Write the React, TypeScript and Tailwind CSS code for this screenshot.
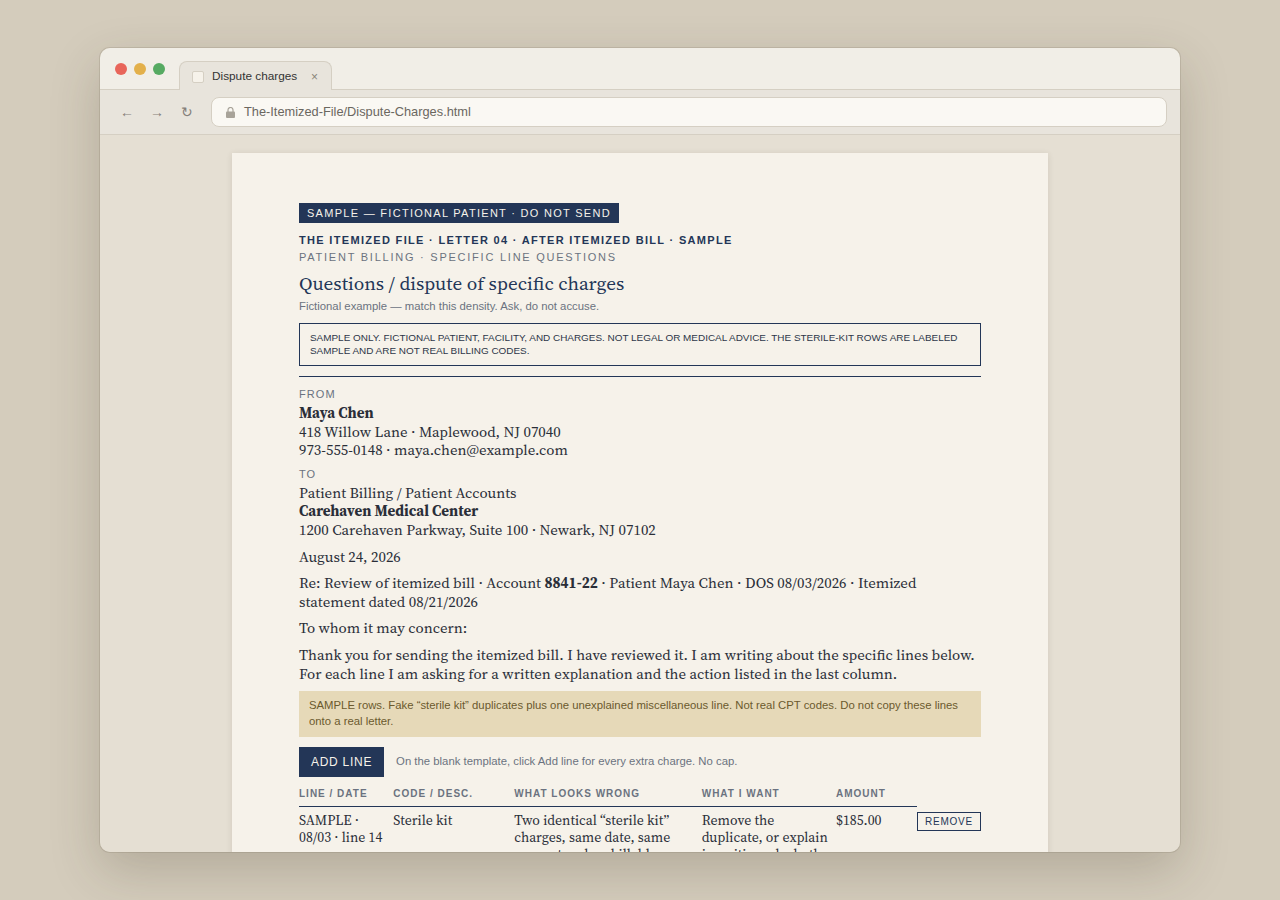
const serif = "font-['Source_Serif_4','Noto_Serif',serif]"
const sans = "font-['Liberation_Sans',sans-serif]"

const cols = [
  { label: 'LINE / DATE', width: 'w-[94.3px]' },
  { label: 'CODE / DESC.', width: 'w-[121px]' },
  { label: 'WHAT LOOKS WRONG', width: 'w-[187.4px]' },
  { label: 'WHAT I WANT', width: 'w-[134.3px]' },
  { label: 'AMOUNT', width: 'w-[81px]' },
]

function BrowserChrome() {
  return (
    <>
      <div className="flex h-[42px] items-end bg-[#f1eee7] pl-[15px] border-b border-[#d5cfc3]">
        <div className="flex gap-[7px] self-start pt-[15px]">
          <span className="w-3 h-3 rounded-full bg-[#e8655a]" />
          <span className="w-3 h-3 rounded-full bg-[#e3b04b]" />
          <span className="w-3 h-3 rounded-full bg-[#56aa62]" />
        </div>
        <div className="flex items-center h-[29px] w-[153px] ml-[14px] -mb-px px-3 pt-[2px] bg-[#e8e4dc] border border-b-0 border-[#d5cfc3] rounded-t-lg">
          <span className="w-3 h-3 rounded-[2px] bg-[#f6f2ea] border border-[#d5cfc3]" />
          <span className="ml-2 text-[11.8px] text-[#333]">Dispute charges</span>
          <span className="ml-auto mr-px text-xs text-[#8a857a]">×</span>
        </div>
      </div>
      <div className="flex items-center h-[45px] bg-[#e8e4dc] border-b border-[#d5cfc3] pl-[18px] pr-[13px]">
        <div className="flex w-[93px] gap-3 text-sm text-[#85807a]">
          <span className="w-[18px] text-center">←</span>
          <span className="w-[18px] text-center">→</span>
          <span className="w-[18px] text-center">↻</span>
        </div>
        <div className="flex flex-1 items-center h-[30px] pl-[14px] pr-3 bg-[#faf8f3] border border-[#d5cfc3] rounded-lg">
          <svg width="9" height="11" viewBox="0 0 9 11" className="text-[#a8a399]">
            <rect x="0" y="4.5" width="9" height="6.5" rx="1" fill="currentColor" />
            <path d="M2 5V3a2.5 2.5 0 0 1 5 0v2" fill="none" stroke="currentColor" strokeWidth="1.2" />
          </svg>
          <span className="ml-[9px] text-[12.8px] text-[#6b675f]">The-Itemized-File/Dispute-Charges.html</span>
        </div>
      </div>
    </>
  )
}

export default function App() {
  return (
    <div className={`flex h-[900px] items-center justify-center bg-[#d4ccbc] ${sans}`}>
      <div className="flex flex-col w-[1080px] h-[804px] overflow-hidden rounded-[10px] shadow-[0_0_0_1px_rgba(120,110,90,0.2),0_18px_50px_rgba(60,50,30,0.22)]">
        <BrowserChrome />
        <div className="flex-1 overflow-hidden bg-[#e5dfd3] pt-[18px]">
          <div className={`mx-auto w-[816px] bg-[#f6f2ea] pt-[50px] px-[67px] pb-16 shadow-[0_1px_6px_rgba(60,50,30,0.12)] text-[14.88px] leading-[18.6px] text-[#2a2e38] ${serif}`}>
            <div className={sans}>
              <div className="inline-block h-5 bg-[#233657] px-2 text-[11px] leading-5 tracking-[0.117em] text-[#f6f2ea] align-top">
                SAMPLE — FICTIONAL PATIENT · DO NOT SEND
              </div>
              <div className="mt-[9px] text-[11px] leading-[17px] font-bold tracking-[0.12em] text-[#233657]">
                THE ITEMIZED FILE · LETTER 04 · AFTER ITEMIZED BILL · SAMPLE
              </div>
              <div className="text-[11px] leading-[17px] tracking-[0.16em] text-[#6b7280]">
                PATIENT BILLING · SPECIFIC LINE QUESTIONS
              </div>
            </div>
            <h1 className="mt-[5px] text-[19.2px] leading-6 font-normal text-[#233657]">
              Questions / dispute of specific charges
            </h1>
            <p className={`mt-[3px] ${sans} text-[11.33px] leading-[17px] text-[#6b7280]`}>
              Fictional example — match this density. Ask, do not accuse.
            </p>
            <div className={`mt-2 border border-[#233657] px-[10px] pt-[7px] pb-2 ${sans} text-[9.93px] leading-[13px] text-[#2d3648]`}>
              SAMPLE ONLY. FICTIONAL PATIENT, FACILITY, AND CHARGES. NOT LEGAL OR MEDICAL ADVICE. THE STERILE-KIT ROWS ARE LABELED SAMPLE AND ARE NOT REAL BILLING CODES.
            </div>
            <hr className="mt-[10px] border-[#233657]" />
            <div className={`mt-[10px] ${sans} text-[11px] leading-[14px] tracking-[0.1em] text-[#6b7280]`}>FROM</div>
            <div className="mt-[3px]">
              <strong>Maya Chen</strong>
              <br />418 Willow Lane · Maplewood, NJ 07040
              <br />973-555-0148 · maya.chen@example.com
            </div>
            <div className={`mt-[7px] ${sans} text-[11px] leading-[14px] tracking-[0.1em] text-[#6b7280]`}>TO</div>
            <div className="mt-[3px]">
              Patient Billing / Patient Accounts
              <br /><strong>Carehaven Medical Center</strong>
              <br />1200 Carehaven Parkway, Suite 100 · Newark, NJ 07102
            </div>
            <p className="mt-2">August 24, 2026</p>
            <p className="mt-2">
              Re: Review of itemized bill · Account <strong>8841-22</strong> · Patient Maya Chen · DOS 08/03/2026 · Itemized statement dated 08/21/2026
            </p>
            <p className="mt-2">To whom it may concern:</p>
            <p className="mt-2">
              Thank you for sending the itemized bill. I have reviewed it. I am writing about the specific lines below. For each line I am asking for a written explanation and the action listed in the last column.
            </p>
            <div className={`mt-2 bg-[#e6d9b8] px-[10px] pt-[6px] pb-2 ${sans} text-[11.33px] leading-4 text-[#6b5a2e]`}>
              SAMPLE rows. Fake “sterile kit” duplicates plus one unexplained miscellaneous line. Not real CPT codes. Do not copy these lines onto a real letter.
            </div>
            <div className={`mt-[10px] flex items-center gap-3 ${sans}`}>
              <button className="h-[30px] bg-[#233657] px-3 text-xs tracking-[0.06em] text-[#f6f2ea]">ADD LINE</button>
              <span className="pb-[2px] text-[11.33px] text-[#6b7280]">On the blank template, click Add line for every extra charge. No cap.</span>
            </div>
            <table className="mt-[3px] table-fixed w-full border-collapse text-[13.8px] leading-[17.25px]">
              <thead>
                <tr className={`${sans} text-[10px] font-bold tracking-[0.1em] text-[#6b7280]`}>
                  {cols.map((c) => (
                    <th key={c.label} className={`${c.width} h-[26px] pt-[2px] border-b border-[#233657] text-left font-bold`}>{c.label}</th>
                  ))}
                  <th />
                </tr>
              </thead>
              <tbody>
                <tr className="align-top">
                  <td className="pt-[5px] pr-2">SAMPLE · 08/03 · line 14</td>
                  <td className="pt-[5px] pr-2">Sterile kit</td>
                  <td className="pt-[5px] pr-2">Two identical “sterile kit” charges, same date, same amount and no billable detail</td>
                  <td className="pt-[5px] pr-1">Remove the duplicate, or explain in writing why both</td>
                  <td className="pt-[5px] pr-2">$185.00</td>
                  <td className="pt-[6px] text-right">
                    <button className={`h-[19px] w-16 border border-[#233657] ${sans} text-[10px] tracking-[0.08em] text-[#233657]`}>REMOVE</button>
                  </td>
                </tr>
              </tbody>
            </table>
          </div>
        </div>
      </div>
    </div>
  )
}
